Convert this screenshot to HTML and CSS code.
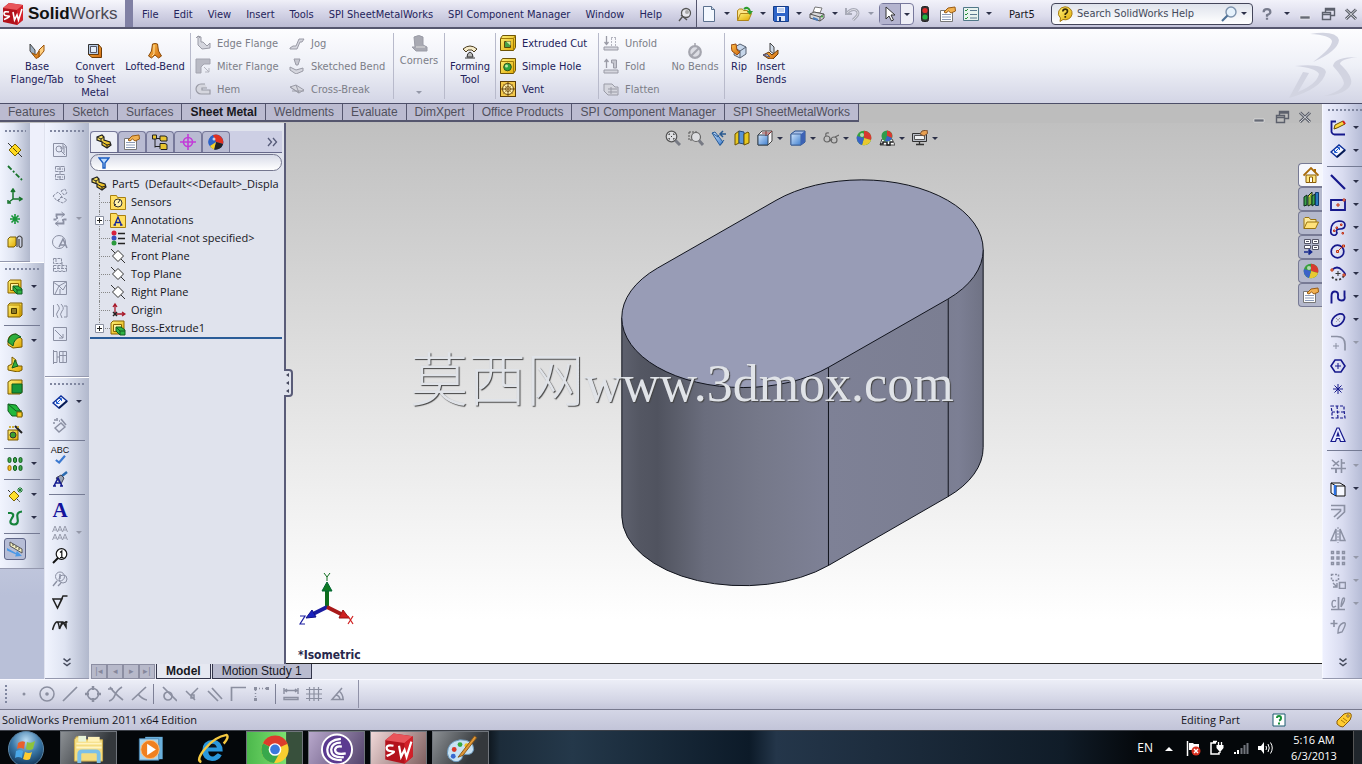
FILE: index.html
```html
<!DOCTYPE html>
<html lang="en">
<head>
<meta charset="utf-8">
<title>SolidWorks Premium 2011</title>
<link rel="stylesheet" href="styles.css">
</head>
<body>
<svg class="sprite" aria-hidden="true">
<defs>
<linearGradient id="gy" x1="0" y1="0" x2="1" y2="1"><stop offset="0" stop-color="#fff27a"/><stop offset="1" stop-color="#e0a800"/></linearGradient>
<linearGradient id="gb" x1="0" y1="0" x2="1" y2="1"><stop offset="0" stop-color="#cfe4fb"/><stop offset="1" stop-color="#3f7fd0"/></linearGradient>
<linearGradient id="go" x1="0" y1="0" x2="1" y2="1"><stop offset="0" stop-color="#ffc04a"/><stop offset="1" stop-color="#d06a10"/></linearGradient>
<radialGradient id="orb" cx=".5" cy=".25" r=".8"><stop offset="0" stop-color="#b9dcf2"/><stop offset=".5" stop-color="#3a78a8"/><stop offset="1" stop-color="#0b2a4a"/></radialGradient>
</defs>
<symbol id="sw" viewBox="0 0 24 24"><path d="M2 6l6-5 14 2v15l-6 5-14-3z" fill="#b3121c"/><path d="M2 6l6-5 14 2-6 5z" fill="#e8545a"/><path d="M16 8l6-5v15l-6 5z" fill="#d32029"/><path d="M8 10q-5-1-5 1.500t4 2.500-4 3.500M12 10l1.500 8 2.500-5 1.500 5L21 7" fill="none" stroke="#fff" stroke-width="1.600"/></symbol>
<symbol id="pin" viewBox="0 0 16 16"><circle cx="9" cy="6" r="4.500" fill="#e8e8ee" stroke="#555" stroke-width="1.300"/><circle cx="10" cy="5" r="2" fill="#aaa"/><path d="M6 9l-4 5M4 8l6 5" stroke="#555" stroke-width="1.400"/></symbol>
<symbol id="new" viewBox="0 0 16 16"><path d="M2.500 .5h8l3 3v12h-11z" fill="#f4f8ff" stroke="#5b708e"/><path d="M10.500 .5v3h3" fill="#cfdcec" stroke="#5b708e"/></symbol>
<symbol id="open" viewBox="0 0 16 16"><path d="M.5 14.500v-10l2-1.500h3l1 1.500h4v2" fill="#fce58a" stroke="#b08518"/><path d="M.5 14.500l3-7h11l-3 7z" fill="url(#gy)" stroke="#b08518"/><path d="M7 3q4-3 6 2" fill="none" stroke="#2e9c2e" stroke-width="2"/><path d="M10 5h6l-3 4z" fill="#2e9c2e"/></symbol>
<symbol id="save" viewBox="0 0 16 16"><path d="M.5 .5h15v15h-14l-1-1z" fill="#2e64c8" stroke="#153c88"/><path d="M4 1h8v6H4z" fill="#f4f7ff"/><path d="M5 3h6M5 5h6" stroke="#8aa6d8"/><path d="M4 10h8v5H4z" fill="#dfe6f5"/><path d="M6 11h2v4H6z" fill="#153c88"/></symbol>
<symbol id="print" viewBox="0 0 16 16"><path d="M4 6l2-5 7 1-2 5z" fill="#fff" stroke="#777"/><path d="M1 8l4-2 10 2v4l-4 3-10-3z" fill="#d8d8da" stroke="#555"/><path d="M1 8l10 3 4-3M11 11v4" fill="none" stroke="#555"/><path d="M4 12l5 2" stroke="#4a7ec0" stroke-width="2"/><circle cx="13" cy="10.500" r="1" fill="#3a3"/></symbol>
<symbol id="undo" viewBox="0 0 16 16"><path d="M1 2v6h6" fill="none" stroke="#a9abb8" stroke-width="2"/><path d="M2 7q5-5 9-3 4 3 0 7l-3 3" fill="none" stroke="#a9abb8" stroke-width="3"/><path d="M2 7q5-5 9-3 4 3 0 7l-3 3" fill="none" stroke="#dcdce4"/></symbol>
<symbol id="arrow" viewBox="0 0 16 16"><path d="M4 1v12l3-3 2.500 5 2-1-2.500-5h4z" fill="#fff" stroke="#333"/></symbol>
<symbol id="traffic" viewBox="0 0 16 16"><rect x="4.500" y=".5" width="7" height="15" rx="2" fill="#333" stroke="#222"/><circle cx="8" cy="4.500" r="2.600" fill="#e02b2b"/><circle cx="8" cy="11" r="2.600" fill="#22b340"/></symbol>
<symbol id="props" viewBox="0 0 16 16"><path d="M.5 4.500h12v11H.5z" fill="#fff" stroke="#777"/><path d="M2 8.500h9M2 11h9M2 13.500h9" stroke="#8b9bb8"/><path d="M4 6l4-4 7-1 .5 4L11 7 8.500 5 6 7z" fill="#f0b050" stroke="#9a5c14"/></symbol>
<symbol id="opts" viewBox="0 0 16 16"><path d="M.5 1.500h15v13H.5z" fill="#e8f2ee" stroke="#507888"/><path d="M2 4l1 1 2-2M2 8l1 1 2-2M2 12l1 1 2-2" fill="none" stroke="#289038"/><path d="M7 4.500h7M7 8.500h7M7 12h7" stroke="#5b7890"/></symbol>
<symbol id="helpb" viewBox="0 0 16 16"><path d="M8 .8a7 6.500 0 1 1-2 12.700L3 15.500l.5-3.500A6.800 6.500 0 0 1 8 .8z" fill="url(#gy)" stroke="#a57a10"/><path d="M5.800 5.500q.2-2.300 2.400-2.300t2.300 2q0 1.300-2.200 2.800v1M8.300 10v1.800" fill="none" stroke="#3a2c08" stroke-width="1.700"/></symbol>
<symbol id="mag" viewBox="0 0 16 16"><circle cx="10" cy="6" r="5" fill="#e6f2fc" stroke="#7d93ad" stroke-width="1.400"/><path d="M6.500 9.500L1 15" stroke="#4d7096" stroke-width="2.200"/></symbol>
<symbol id="q" viewBox="0 0 16 16"><path d="M3.500 5.500q0-4 4.500-4t4.500 4q0 2-4.500 4v2M8 13v2.500" fill="none" stroke="#777b8c" stroke-width="3"/></symbol>
<symbol id="min" viewBox="0 0 16 16"><path d="M3 10h10v3H3z" fill="#666a75" stroke="#eee" stroke-width=".6"/></symbol>
<symbol id="rest" viewBox="0 0 16 16"><path d="M5.500 6V2.500h9v7H11M5 4h9" fill="none" stroke="#5c606c" stroke-width="1.400"/><path d="M2.500 6.500h8v7h-8zM2 8.500h9" fill="none" stroke="#5c606c" stroke-width="1.400"/></symbol>
<symbol id="close" viewBox="0 0 16 16"><path d="M3 3.500l10 9.500m0-9.500L3 13" stroke="#5a5e68" stroke-width="3"/><path d="M3 3.500l10 9.500m0-9.500L3 13" stroke="#d8dae0"/></symbol>
<symbol id="baseflange" viewBox="0 0 16 16"><path d="M1 1l5 6v7L1 8z" fill="#9fb0c2" stroke="#444"/><path d="M10 7l5-5v6l-5 6z" fill="#ffcf80" stroke="#9a5208"/><path d="M3 10l4 2 3-4v6l-3 1.500z" fill="url(#go)" stroke="#9a5208"/></symbol>
<symbol id="convert" viewBox="0 0 16 16"><path d="M1.500 1.500h10v10h-10z" fill="#b8cbe2" stroke="#333"/><path d="M3.500 3.500h6v6h-6z" fill="#e4eefa" stroke="#556"/><path d="M11.500 1.500l3 3.500v9.500H5l-3.500-3h10z" fill="url(#go)" stroke="#6b3a08"/></symbol>
<symbol id="loft" viewBox="0 0 16 16"><path d="M5.500 1q2.500-1 5 0l1 7 3 5-3 2-3.500-3L4.500 15l-3-2 3-5z" fill="url(#go)" stroke="#8a4a08"/><path d="M7 2v9l-2 2" fill="none" stroke="#ffe0a0"/></symbol>
<symbol id="edge" viewBox="0 0 16 16"><path d="M3 1v9l4 4 8-1V8l-3 3-4-4H6V2zM1 3l2-2 2 2" fill="#d5d6de" stroke="#9a9ba6"/></symbol>
<symbol id="miter" viewBox="0 0 16 16"><path d="M1 1h14v5H9L6 9v6H1z" fill="#b9bac4" stroke="#a4a5b0"/><path d="M9 9l5 5M14 10v4h-4" fill="none" stroke="#b4b5bf"/></symbol>
<symbol id="hem" viewBox="0 0 16 16"><path d="M10 3H6a4.500 4.500 0 0 0 0 10h9V9H7V7h5" fill="#d5d6de" stroke="#9a9ba6" stroke-width="1.200"/></symbol>
<symbol id="jog" viewBox="0 0 16 16"><path d="M1 13l3-2h3l3-7h5l-2 3h-2l-3 7H1z" fill="#d5d6de" stroke="#9a9ba6"/></symbol>
<symbol id="sbend" viewBox="0 0 16 16"><path d="M5 1h6L9 7H7z" fill="#c6c7d0" stroke="#9a9ba6"/><path d="M1 9l6 3 7-2v3l-7 3-6-4z" fill="#d5d6de" stroke="#9a9ba6"/></symbol>
<symbol id="cross" viewBox="0 0 16 16"><path d="M1 6l6-2 8 5-5 3z" fill="#d5d6de" stroke="#9a9ba6"/><path d="M1 6l9 6M7 4l3 8M3 10h12" stroke="#9a9ba6"/></symbol>
<symbol id="corner" viewBox="0 0 18 18"><path d="M4 2q5-3 9 0v8l4 2v4H6l-4-4h3z" fill="#a8a9b2" stroke="#9a9ba6"/><path d="M6 12h9" stroke="#ddd"/></symbol>
<symbol id="form" viewBox="0 0 16 16"><path d="M1 6q7-6 14 0l-3 3-2-2H6L4 9z" fill="#f6eccb" stroke="#4a3c20"/><path d="M5 14q0-4 3-5 3 1 3 5z" fill="#bbb" stroke="#333"/><path d="M3 15h10" stroke="#333"/></symbol>
<symbol id="ecut" viewBox="0 0 16 16"><path d="M.5 3.500l2-3h13v12l-2 3H.5z" fill="url(#gy)" stroke="#6e5508"/><path d="M.5 3.500h13v12M13.500 3.500l2-3" fill="none" stroke="#a07c08"/><path d="M4.500 6.500h6v6h-6z" fill="#4aa048" stroke="#5a4a08"/><path d="M6 6.500h4.500v4z" fill="#d8f0a0"/></symbol>
<symbol id="shole" viewBox="0 0 16 16"><path d="M.5 3.500l2-3h13v12l-2 3H.5z" fill="url(#gy)" stroke="#6e5508"/><path d="M.5 3.500h13v12" fill="none" stroke="#a07c08"/><circle cx="7.500" cy="9" r="3.800" fill="#2fa540" stroke="#32551a"/><circle cx="6.500" cy="8" r="1.500" fill="#bfe8a8"/></symbol>
<symbol id="vent" viewBox="0 0 16 16"><rect x=".5" y=".5" width="15" height="15" fill="#f2c84a" stroke="#5a3c08"/><circle cx="8" cy="8" r="5.500" fill="#fff2b0" stroke="#6b4810"/><circle cx="8" cy="8" r="2.500" fill="none" stroke="#6b4810" stroke-width=".8"/><path d="M8 0v16M0 8h16" stroke="#6b4810"/><path d="M3 3l10 10M13 3L3 13" stroke="#a07830" stroke-width=".7"/></symbol>
<symbol id="unfold" viewBox="0 0 16 16"><path d="M3.500 1v8M1.500 7l2 2.500L5.500 7" fill="none" stroke="#9a9ba6" stroke-width="1.300"/><path d="M8.500 3v8M12.500 3v8M8 2.500h6" stroke="#b4b5bf" stroke-dasharray="2 1"/><path d="M1 12h14v3H1z" fill="#d5d6de" stroke="#9a9ba6"/></symbol>
<symbol id="fold" viewBox="0 0 16 16"><path d="M3.500 2v8M1.500 4l2-2.500L5.500 4" fill="none" stroke="#9a9ba6" stroke-width="1.300"/><path d="M8.500 2h5v8h-3V5h-2z" fill="#c6c7d0" stroke="#9a9ba6"/><path d="M1 12h14v3H1z" fill="#d5d6de" stroke="#9a9ba6"/></symbol>
<symbol id="flat" viewBox="0 0 16 16"><path d="M1 3h8l3 3h3v8H5L1 10z" fill="#d5d6de" stroke="#9a9ba6"/><path d="M5 8h9M5 11h9M8 6v7" stroke="#9a9ba6"/></symbol>
<symbol id="nob" viewBox="0 0 16 16"><path d="M8 0v5" stroke="#a4a5ae" stroke-width="1.500"/><circle cx="8" cy="9" r="5.800" fill="#dcdde4" stroke="#a4a5ae" stroke-width="2.200"/><path d="M4 13l8-8" stroke="#a4a5ae" stroke-width="2.200"/></symbol>
<symbol id="rip" viewBox="0 0 16 16"><path d="M4 4l5-3 6 3v7l-6 4-6-3z" fill="#c6d6ea" stroke="#555f70"/><path d="M9 8v7M9 8l6-4M9 8L4 5" stroke="#555f70"/><path d="M0 2l5-1 1 6 3 2-3 3-5-4z" fill="url(#go)" stroke="#994a10"/></symbol>
<symbol id="ibend" viewBox="0 0 16 16"><path d="M7 0l4 4v7L7 8z" fill="#cfdae8" stroke="#444"/><path d="M0 12l6-3 3 3 6-5v4l-5 5H6z" fill="url(#go)" stroke="#6b3a08"/><path d="M0 12l4-1 3 3z" fill="#dce8f4" stroke="#557"/></symbol>
<symbol id="plane" viewBox="0 0 16 16"><path d="M1 1l14 14" stroke="#333"/><path d="M8 2l6 6-6 6-6-6z" fill="#ffd91f" stroke="#7a6200"/><path d="M6 6l4 4" stroke="#5a4a00"/></symbol>
<symbol id="axis" viewBox="0 0 16 16"><path d="M1 1l14 14" stroke="#18742c" stroke-width="1.800" stroke-dasharray="5 2 2 2"/></symbol>
<symbol id="csys" viewBox="0 0 16 16"><path d="M6 2v9h8M6 11l-4 3M4 4l2-3 2 3M12 9l3 2-3 2M1 12v3h3" fill="none" stroke="#18742c" stroke-width="1.500"/></symbol>
<symbol id="pt" viewBox="0 0 16 16"><path d="M8 3v10M3 8h10M4.500 4.500l7 7M11.500 4.500l-7 7" stroke="#18943a" stroke-width="1.600"/></symbol>
<symbol id="mate" viewBox="0 0 16 16"><path d="M1 5l2-2h6v8l-2 2H1z" fill="url(#gy)" stroke="#7a5c00"/><path d="M10 13V4q2.500-4 5 0v8q-1.500 3-3 0V5" fill="none" stroke="#444" stroke-width="1.200"/></symbol>
<symbol id="boss" viewBox="0 0 16 16"><path d="M1 3l2-2h11v11l-2 2H1z" fill="url(#gy)" stroke="#8a6500"/><path d="M3.500 4.500h8v7h-8z" fill="#fff3a0" stroke="#8a6500"/><path d="M6 7h5l4 3v5h-5l-4-4z" fill="#2fb344" stroke="#115c20"/><path d="M10 11h5M10 11v4M6 7l4 4" stroke="#115c20"/></symbol>
<symbol id="cut" viewBox="0 0 16 16"><path d="M1 3l2-2h12v12l-2 2H1z" fill="url(#gy)" stroke="#7a5a00"/><path d="M1 3h12v12" fill="none" stroke="#b48a00"/><path d="M4.500 6.500h5v5h-5z" fill="#8c7a28" stroke="#4a3a00"/></symbol>
<symbol id="fil" viewBox="0 0 16 16"><path d="M1 7q1-6 8-6l6 5v8l-9 1-5-3z" fill="url(#gy)" stroke="#7a5a00"/><path d="M1 9q1-8 8-8l5 3q-7 1-8 9z" fill="#2fae3c" stroke="#115c20"/></symbol>
<symbol id="rib" viewBox="0 0 16 16"><path d="M5 1l4 3v6h6v4l-4 2-10-2v-4l4-2z" fill="url(#gy)" stroke="#7a5a00"/><path d="M8 4l3 6-6 2z" fill="#2fae3c" stroke="#115c20"/></symbol>
<symbol id="shell" viewBox="0 0 16 16"><path d="M1 3l3-2h11v12l-2 2H1z" fill="url(#gy)" stroke="#7a5a00"/><path d="M5 5h10v9H5z" fill="#16963a" stroke="#115c20"/></symbol>
<symbol id="draft" viewBox="0 0 16 16"><path d="M1 2l8 1 6 8v3H5L1 9z" fill="#22b83c" stroke="#115c20"/><path d="M1 2l8 7h6" fill="none" stroke="#115c20"/><path d="M10 10h5v5h-5z" fill="#f4cc28" stroke="#7a5a00"/></symbol>
<symbol id="hwiz" viewBox="0 0 16 16"><path d="M1 5h10v10H1z" fill="url(#gy)" stroke="#7a5a00"/><circle cx="6" cy="10" r="3" fill="#3aa030" stroke="#333"/><path d="M8 1l7 7" stroke="#222" stroke-width="2"/><path d="M2 2h2M6 1v2M11 1v2" stroke="#c8a000" stroke-width="1.500"/></symbol>
<symbol id="patt" viewBox="0 0 16 16"><g fill="#3fa848" stroke="#115c20"><rect x="1" y="1.500" width="3" height="5" rx="1.500"/><rect x="6.500" y="1.500" width="3" height="5" rx="1.500"/><rect x="12" y="1.500" width="3" height="5" rx="1.500"/><rect x="6.500" y="9.500" width="3" height="5" rx="1.500"/><rect x="12" y="9.500" width="3" height="5" rx="1.500"/></g><rect x="1" y="9.500" width="3" height="5" rx="1.500" fill="#f4c020" stroke="#a06a00"/></symbol>
<symbol id="refg" viewBox="0 0 16 16"><path d="M1 3l12 12" stroke="#333" stroke-dasharray="3 1"/><path d="M7 4l5 5-5 5-5-5z" fill="#ffe02a" stroke="#7a6200"/><path d="M13 0v6M10 3h6M11 1l4 4M15 1l-4 4" stroke="#187a2c"/></symbol>
<symbol id="curve" viewBox="0 0 16 16"><path d="M1 3h3q4 1 1 5-4 6 2 6.500 5 0 3.500-6.500Q9 2 15 1.500" fill="none" stroke="#14823a" stroke-width="2.200"/></symbol>
<symbol id="inst" viewBox="0 0 16 16"><path d="M3 1l12 7v4L3 5z" fill="#f4f0c0" stroke="#555"/><path d="M6 3v2M9 5v2M12 7v2" stroke="#444"/><path d="M0 7l9 5 1-2 5 5-7 .5 1-2-9-4z" fill="#4a9ae8"/></symbol>
<symbol id="g1" viewBox="0 0 16 16"><path d="M1.500 1.500h10l3 3v10h-13zM11 2v3h3" /><circle cx="7" cy="7" r="3"/><path d="M9 9l4 4M8 6h4v5"/></symbol>
<symbol id="g2" viewBox="0 0 16 16"><path d="M3.500 1.500h9v5h-9zM3.500 9.500h9v5h-9zM8 1v14M5 4h6M5 12h6" stroke-dasharray="4 1"/></symbol>
<symbol id="g3" viewBox="0 0 16 16"><path d="M1 8l5-4 4 4-5 5zM6 13l4-4 5 3-4 3zM9 3l4-2 2 4-3 2z" stroke-dasharray="3 1"/></symbol>
<symbol id="g4" viewBox="0 0 16 16"><path d="M4.500 6V3.500h8M11.500 10v2.500h-8M4.500 8.500h-3M14.500 8.500h-3M5 6v2M11 8v2" stroke-width="1.800"/><path d="M9.500 1l3 2.500-3 2.500M6.500 10l-3 2.500 3 2.500"/></symbol>
<symbol id="g5" viewBox="0 0 16 16"><circle cx="7" cy="8" r="6.500"/><path d="M7 13l4-8 4 9M8 11h6" stroke-width="1.500"/></symbol>
<symbol id="g6" viewBox="0 0 16 16"><path d="M1.500 1.500h8v5h-8zM1.500 8.500h13v6h-13zM6 9v5M10 5v9M1 11.500h14M4 2v4" stroke-dasharray="3 1"/></symbol>
<symbol id="g7" viewBox="0 0 16 16"><path d="M1.500 1.500h13v13h-13zM1 2l6 4 7-4M3 14l4-8 4 4 3-5M8 9v5"/></symbol>
<symbol id="g8" viewBox="0 0 16 16"><path d="M1.500 2v12M5 1q4 4 1 7t0 7M9 1q4 4 1 7t0 7M12 3h3v11h-3"/></symbol>
<symbol id="g9" viewBox="0 0 16 16"><path d="M1.500 1.500h13v13h-13zM3 4l8 8M11 8v4H7"/></symbol>
<symbol id="g10" viewBox="0 0 16 16"><path d="M1.500 1v14M1 2.500h4v11H1M7.500 2.500h7v11h-7zM7 6.500h8M11 2v11M5 8h3"/></symbol>
<symbol id="dim" viewBox="0 0 16 16"><path d="M1 9l8-7 6 5-8 7z" fill="#f4f7ff" stroke="#0d2f9a" stroke-width="1.400"/><path d="M5 9l4-4M4.500 6.500V9.500H7.500M7 4.500h2.500V7" fill="none" stroke="#1c5bd0"/><path d="M7 14l8-7" stroke="#081c55" stroke-width="2"/></symbol>
<symbol id="dimg" viewBox="0 0 16 16"><path d="M3 11l6-5 4 4-6 5z" fill="none" stroke="#8b90a3" stroke-width="1.400"/><path d="M9 2l5 6M2 3h2M5 1v3M1 6h2M7 4h1" stroke="#8b90a3" stroke-width="1.600"/></symbol>
<symbol id="chk" viewBox="0 0 16 12"><path d="M3 6l4 3 7-8" fill="none" stroke="#3a78d0" stroke-width="2.600"/></symbol>
<symbol id="paint" viewBox="0 0 16 16"><path d="M15 1l-5 4" stroke="#2a6ab0" stroke-width="2.500"/><path d="M4 7l5-3 3 3-3 6z" fill="#9aa4b4" stroke="#445"/><path d="M2 15l4-8 4 8M3.500 12h5M1 15h3M8 15h3" fill="none" stroke="#151c90" stroke-width="1.600"/></symbol>
<symbol id="aaa" viewBox="0 0 16 16"><path d="M.5 7L3 1l2.500 6L8 1l2.500 6L13 1l2.500 6M1.500 5h3M6.500 5h3M11.500 5h3M.5 15L3 9l2.500 6L8 9l2.500 6L13 9l2.500 6M1.500 13h3M6.500 13h3M11.500 13h3" fill="none" stroke="#999dad"/></symbol>
<symbol id="ball" viewBox="0 0 16 16"><circle cx="9.500" cy="6" r="5.300" fill="#fff" stroke="#111" stroke-width="1.200"/><path d="M8 4.500l1.800-1.500v6.500M8 9.500h3.500" fill="none" stroke="#111" stroke-width="1.200"/><path d="M6 10l-5 5" stroke="#111" stroke-width="2"/></symbol>
<symbol id="ballg" viewBox="0 0 16 16"><circle cx="8" cy="5.500" r="4.500" fill="none" stroke="#8b90a3"/><circle cx="11" cy="8" r="4" fill="none" stroke="#8b90a3"/><path d="M8 3v5M5 10l-4 5M9 12l-3 3" stroke="#8b90a3" stroke-width="1.400"/></symbol>
<symbol id="surf" viewBox="0 0 16 16"><path d="M1 5h9l-4.500 9zM5.500 14L11 2h4.500" fill="none" stroke="#222" stroke-width="1.500"/></symbol>
<symbol id="weld" viewBox="0 0 16 16"><path d="M.5 13q2-7 4-8t3 7q2-7 8-7M5 5h6l3 5V4M10 5l-2 6" fill="none" stroke="#222" stroke-width="1.500"/></symbol>
<symbol id="chev" viewBox="0 0 16 16"><path d="M4 3l4 3 4-3M4 8l4 3 4-3" fill="none" stroke="#444a5c" stroke-width="1.700"/></symbol>
<symbol id="chevr" viewBox="0 0 16 16"><path d="M4 4l3.500 4L4 12M9 4l3.500 4L9 12" fill="none" stroke="#555a78" stroke-width="1.300"/></symbol>
<symbol id="sketch" viewBox="0 0 16 16"><path d="M6 1.500H1.500V12q1 2.500 3 2.500H15" fill="none" stroke="#16188c" stroke-width="1.800"/><path d="M4 9l1-4 8-4 2 3-8 4z" fill="#ffd840" stroke="#6b5200"/><path d="M13 1l2 3" stroke="#d02020" stroke-width="2"/></symbol>
<symbol id="line" viewBox="0 0 16 16"><path d="M1 1l14 14" stroke="#16188c" stroke-width="2.200"/></symbol>
<symbol id="rect" viewBox="0 0 16 16"><path d="M1 3h14v10H1z" fill="none" stroke="#16188c" stroke-width="1.800"/><path d="M7 7h2v2H7zM13 2h2v2h-2z" fill="#f8e0c0" stroke="#c03018"/></symbol>
<symbol id="slot" viewBox="0 0 16 16"><path d="M1 10Q1 2 9 1q6 0 6 4t-5 4-3 4q-1 3-4 2t-2-5z" fill="none" stroke="#16188c" stroke-width="1.700"/><path d="M3.500 10h1.500v1.500h-1.500zM10.500 4h1.500v1.500h-1.500zM12 12.500h1.500v1.500h-1.500zM6 7h1.500v1.500H6z" fill="#f8e0c0" stroke="#c03018"/></symbol>
<symbol id="circ" viewBox="0 0 16 16"><circle cx="7.500" cy="8.500" r="6.300" fill="none" stroke="#16188c" stroke-width="1.700"/><path d="M8 8l5-5" stroke="#c03018"/><path d="M6.500 7.500h2v2h-2zM12.500 2h2v2h-2z" fill="#f8d080" stroke="#c03018"/></symbol>
<symbol id="arc" viewBox="0 0 16 16"><path d="M2 4q5-5 10 0t2 5" fill="none" stroke="#16188c" stroke-width="1.700"/><path d="M14 10q-6 7-12 1" fill="none" stroke="#333" stroke-width="1.800" stroke-dasharray="2 2"/><path d="M8 5v5M5.500 7.500h5" stroke="#333"/><path d="M1 3h2v2H1zM13 8h2v2h-2z" fill="#f8d080" stroke="#c03018"/></symbol>
<symbol id="spl" viewBox="0 0 16 16"><path d="M1.500 14.500V7q0-4.500 3.500-4.500T8 7t3.500 4.500 3-4.500V1.500" fill="none" stroke="#16188c" stroke-width="1.900"/></symbol>
<symbol id="ell" viewBox="0 0 16 16"><ellipse cx="8" cy="8" rx="7.500" ry="4.800" transform="rotate(-42 8 8)" fill="none" stroke="#16188c" stroke-width="1.700"/><path d="M6 6l4 4M10 6l-4 4" stroke="#777" stroke-dasharray="1 1"/></symbol>
<symbol id="sfil" viewBox="0 0 16 16"><path d="M1 1.500h6q8 0 8 8v6" fill="none" stroke="#8b90a3" stroke-width="1.700"/><path d="M6 8v6M3 11h6" stroke="#8b90a3"/></symbol>
<symbol id="poly" viewBox="0 0 16 16"><path d="M5 2h6l4 6-4 6H5L1 8z" fill="none" stroke="#16188c" stroke-width="1.600"/><path d="M8 5v6M5 8h6" stroke="#16188c"/></symbol>
<symbol id="spt" viewBox="0 0 16 16"><path d="M8 3v10M3 8h10M4.500 4.500l7 7M11.500 4.500l-7 7" stroke="#16188c"/></symbol>
<symbol id="cplane" viewBox="0 0 16 16"><path d="M1 2h13v4l1 8H2V8zM2 8h12M7 2l1 12" fill="none" stroke="#16188c" stroke-width="1.200" stroke-dasharray="3 1.500"/></symbol>
<symbol id="stext" viewBox="0 0 16 16"><path d="M1 14.500L7 1h2l6 13.500h-4.500l-1-3h-3l-1 3zM7 9h2L8 6z" fill="#e8ecff" stroke="#16188c" stroke-width="1.200"/></symbol>
<symbol id="trim" viewBox="0 0 16 16"><path d="M11.500 1v14M1 10.500h15M2 2l7 6M9 3L3 8M11 5h4" fill="none" stroke="#8b90a3" stroke-width="1.600"/><path d="M6 11v4" stroke="#8b90a3" stroke-width="2"/></symbol>
<symbol id="conv" viewBox="0 0 16 16"><path d="M1 2h9l5 3v10H6L1 12z" fill="#f6f8ff" stroke="#111"/><path d="M1 2l5 3h9M6 5v10" fill="none" stroke="#111"/><path d="M5 4v10" stroke="#2a6fe0" stroke-width="2.500"/></symbol>
<symbol id="offs" viewBox="0 0 16 16"><path d="M1 1.500h13.500V8L7 15M1 5.500h9.500V7L4 13" fill="none" stroke="#8b90a3" stroke-width="1.700"/></symbol>
<symbol id="mirr" viewBox="0 0 16 16"><path d="M8 0v16" stroke="#8b90a3" stroke-dasharray="2 1"/><path d="M6 2L1 13.500h5zM10 2l5 11.500h-5z" fill="none" stroke="#8b90a3" stroke-width="1.500"/></symbol>
<symbol id="lpat" viewBox="0 0 16 16"><path d="M1.500 1.500h2v2h-2zM7 1.500h2v2H7zM12.500 1.500h2v2h-2zM1.500 7h2v2h-2zM7 7h2v2H7zM12.500 7h2v2h-2zM1.500 12.500h2v2h-2zM7 12.500h2v2H7zM12.500 12.500h2v2h-2z" fill="none" stroke="#8b90a3" stroke-width="1.400"/></symbol>
<symbol id="move" viewBox="0 0 16 16"><path d="M1.500 1.500h7v6h-7z" fill="none" stroke="#8b90a3" stroke-width="1.500" stroke-dasharray="2 1.500"/><path d="M9.500 9.500h6v6h-6z" fill="none" stroke="#8b90a3" stroke-width="1.600"/><path d="M3 10l4 4M7 10v4H3" fill="none" stroke="#8b90a3" stroke-width="1.400"/></symbol>
<symbol id="rel" viewBox="0 0 16 16"><path d="M1 13.500h14M8.500 1v12" stroke="#8b90a3" stroke-width="1.700"/><path d="M6 5q-4-2-4 3t4 2M11 11q5-8 3-9t-3 9" fill="none" stroke="#8b90a3" stroke-width="1.400"/></symbol>
<symbol id="rep" viewBox="0 0 16 16"><path d="M4 1v7M.5 4.500h7" stroke="#8b90a3" stroke-width="1.600"/><path d="M8 14q0-8 5-10t-1 9z" fill="none" stroke="#8b90a3" stroke-width="1.400"/></symbol>
<symbol id="part" viewBox="0 0 16 16"><path d="M1 3l5-2 2 2v3l6 2 1 3-4 3-5-3V8L1 6z" fill="url(#gy)" stroke="#222" stroke-width="1.200"/><path d="M1 3l4 2 3-2M6 8l5 3 4-1M11 11v3M5 5v3" fill="none" stroke="#222"/></symbol>
<symbol id="cfg" viewBox="0 0 16 16"><path d="M3 2v11.500M3 4.500h5M3 12.500h5" stroke="#222" fill="none"/><path d="M.5 1h4v4h-4zM8 2h5l2 1v4H9L8 6zM8 9.500h5l2 1v5H9l-1-1z" fill="#e8c430" stroke="#222"/></symbol>
<symbol id="dimx" viewBox="0 0 16 16"><circle cx="8" cy="8" r="4.500" fill="none" stroke="#c23cd8" stroke-width="1.600"/><path d="M8 0v16M0 8h16" stroke="#c23cd8" stroke-width="1.600"/></symbol>
<symbol id="app" viewBox="0 0 16 16"><circle cx="8" cy="8" r="7.500" fill="#2b62c8"/><path d="M8 8L1 11A7.500 7.500 0 0 1 5 1z" fill="#2b62c8"/><path d="M8 8L5 1a7.500 7.500 0 0 1 10 9z" fill="#e03020"/><path d="M8 8l7 2a7.500 7.500 0 0 1-9 5.500z" fill="#222"/><path d="M8 8l-2 7.500A7.500 7.500 0 0 1 2 12z" fill="#f4d028"/><circle cx="6" cy="5" r="1.500" fill="#fff" opacity=".7"/></symbol>
<symbol id="rgb" viewBox="0 0 16 16"><circle cx="8" cy="8" r="7.300" fill="#38a03c"/><path d="M8 8V.7A7.300 7.300 0 0 1 15 10z" fill="#d83a30"/><path d="M8 8l7 2A7.300 7.300 0 0 1 6 15z" fill="#e8c830"/><path d="M8 8L6 15A7.300 7.300 0 0 1 1 6z" fill="#3a62c8"/><circle cx="6" cy="5" r="2" fill="#fff" opacity=".6"/></symbol>
<symbol id="funnel" viewBox="0 0 12 12"><path d="M1 1h10L7 6v5H5V6z" fill="#bcdcff" stroke="#1b5cc0" stroke-width="1.400"/></symbol>
<symbol id="sens" viewBox="0 0 16 16"><path d="M.5 1.500h6l1 2h8v12H.5z" fill="#ffdf60" stroke="#a98010"/><circle cx="8" cy="9" r="4" fill="#fff3b0" stroke="#333"/><path d="M8 9l2-3M4 12l2-2" stroke="#333"/></symbol>
<symbol id="anno" viewBox="0 0 16 16"><path d="M.5 1.500h6l1 2h8v12H.5z" fill="#ffdf60" stroke="#a98010"/><path d="M4.500 13L8 5l3.500 8M6 10.500h4M3.500 13h2.500M10 13h2.500" fill="none" stroke="#14259c" stroke-width="1.300"/></symbol>
<symbol id="mat" viewBox="0 0 16 16"><circle cx="4" cy="3" r="2.500" fill="#d8203c"/><circle cx="4" cy="8" r="2.500" fill="#3a4ec0"/><circle cx="4" cy="13" r="2.500" fill="#2a9a3c"/><path d="M8 3.500h7M8 8.500h7M8 13.500h7" stroke="#222" stroke-width="1.500"/></symbol>
<symbol id="pl" viewBox="0 0 16 16"><path d="M8 2.500l5.500 5.500L8 13.500 2.500 8z" fill="#fff" stroke="#333"/><path d="M1 1l4 4M11 11l4 4" stroke="#333"/></symbol>
<symbol id="orig" viewBox="0 0 16 16"><path d="M5 12V2M3 5l2-3 2 3M5 12h9M12 10l3 2-3 2" fill="none" stroke="#a81828" stroke-width="1.300"/><path d="M3 10l4 4M7 10l-4 4" stroke="#222" stroke-width="1.500"/></symbol>
<symbol id="zfit" viewBox="0 0 16 16"><circle cx="6.500" cy="6.500" r="5.300" fill="#dcdde0" stroke="#555" stroke-width="1.200"/><path d="M4 5V4h1M8 4h1v1M9 8v1H8M5 9H4V8M6 6.500h1" fill="none" stroke="#333"/><path d="M10.500 10.500l4.500 4.500" stroke="#777a84" stroke-width="3"/></symbol>
<symbol id="zarea" viewBox="0 0 16 16"><path d="M1 2h8v8H1z" fill="none" stroke="#555" stroke-dasharray="2 1"/><circle cx="8" cy="7" r="4.500" fill="#dcdde0" stroke="#666" stroke-width="1.200"/><path d="M11 10.500l4 4.500" stroke="#777a84" stroke-width="3"/></symbol>
<symbol id="prev" viewBox="0 0 16 16"><path d="M1 3l3-1 8 10-3 3.500z" fill="url(#gb)" stroke="#285c98"/><path d="M1 3l6 4 1-2M9 15l4-5" fill="none" stroke="#285c98"/><path d="M15 4H9M12 1L9 4l3 3" fill="none" stroke="#2a5a90" stroke-width="1.500"/></symbol>
<symbol id="sect" viewBox="0 0 16 16"><path d="M1 4l4-3v12l-4 2z" fill="#e8c820" stroke="#6b5200"/><path d="M5 1l5 1v12l-5-1z" fill="#5a94d8" stroke="#234a80"/><path d="M10 4l4-2 1 1v10l-5 2z" fill="#e8c820" stroke="#6b5200"/></symbol>
<symbol id="vcube" viewBox="0 0 16 16"><path d="M1 5l4-4h10v10l-4 4H1z" fill="#f4f4f6" stroke="#444"/><path d="M1 5h10v10H1z" fill="url(#gb)" stroke="#345"/><path d="M11 5l4-4M9 1v5M5 3h8" stroke="#843030"/></symbol>
<symbol id="dcube" viewBox="0 0 16 16"><path d="M1 4l4-3h10v11l-4 3H1z" fill="#a8c0e8" stroke="#234a88"/><path d="M1 4h10v11H1z" fill="url(#gb)" stroke="#41659c"/><path d="M11 4l4-3v11l-4 3z" fill="#3c62b4"/></symbol>
<symbol id="glass" viewBox="0 0 16 16"><circle cx="4" cy="9" r="3" fill="none" stroke="#666" stroke-width="1.200"/><circle cx="11" cy="10" r="3" fill="none" stroke="#666" stroke-width="1.200"/><path d="M3 6q-1-4 3-3M7 9q1 3 2 0M12 7l4-2" fill="none" stroke="#666" stroke-width="1.200"/></symbol>
<symbol id="scene" viewBox="0 0 16 16"><path d="M1 15l2-6h10l3 6z" fill="#fff" stroke="#444"/><path d="M1 14h3v-2h4v3h3v-3h3" fill="none" stroke="#222" stroke-width="1.500"/><circle cx="8" cy="6" r="5.500" fill="#2e9c4c"/><path d="M8 6V.5A5.500 5.500 0 0 1 13 8z" fill="#d83a30"/><path d="M8 6l5 2a5.500 5.500 0 0 1-7 3z" fill="#3a62c8"/></symbol>
<symbol id="vset" viewBox="0 0 16 16"><path d="M.5 3.500h14v8h-14z" fill="#b8bcc4" stroke="#333"/><path d="M2.500 5.500h10v4h-10z" fill="#f0f2f4" stroke="#555"/><path d="M7.500 12v2M4 14.500h8" stroke="#333" stroke-width="1.300"/><path d="M8 4l2-3 5-1 .5 3.500L12 6z" fill="#e8a050" stroke="#7a5030"/></symbol>
<symbol id="home" viewBox="0 0 16 16"><path d="M3 8h10v7.500H3z" fill="#ffe680" stroke="#8a5c08"/><path d="M.5 8.500L8 1l7.500 7.500" fill="none" stroke="#a86a08" stroke-width="1.800"/><path d="M6.500 10h3v5.500h-3z" fill="#fff" stroke="#8a5c08"/><path d="M12 2v3" stroke="#a86a08" stroke-width="2"/></symbol>
<symbol id="lib" viewBox="0 0 16 16"><path d="M1 6l3-2v10l-3 1z" fill="#3aa04c" stroke="#0c2c18"/><path d="M5 5l4-4v12l-4 2z" fill="#e0d040" stroke="#0c2c18"/><path d="M6 6v8M8 4v9" stroke="#2a8a3c"/><path d="M9 5l3-2v10l-3 2z" fill="#3aa04c" stroke="#0c2c18"/><path d="M12.500 1.500h3v13h-3z" fill="#2a7cc0" stroke="#123c70"/></symbol>
<symbol id="fold2" viewBox="0 0 16 16"><path d="M1 13.500v-10l1-1h4l1.500 2H13v3" fill="#fce99a" stroke="#9a7410"/><path d="M1 13.500l3-6.500h11.500l-3 6.500z" fill="#ffe27a" stroke="#9a7410"/></symbol>
<symbol id="vpal" viewBox="0 0 16 16"><path d="M1.500 .5h6v4h-6zM9.500 .5h6v4h-6zM9.500 6.500h6v4h-6zM1.500 6.500h6v3h-6z" fill="#fff" stroke="#556"/><path d="M3 2.500h3M11 2.500h3M11 8.500h3" stroke="#556"/><path d="M1 13h7M5.500 10.500L8.500 13l-3 2.500" fill="none" stroke="#16288c" stroke-width="1.700"/></symbol>
<symbol id="xbox" viewBox="0 0 9 9"><path d="M.5 .5h8v8h-8z" fill="#fff" stroke="#8a90a0"/><path d="M2 4.500h5M4.500 2v5" stroke="#222"/></symbol>
<symbol id="s1" viewBox="0 0 16 16"><circle cx="8" cy="8" r="1.500" fill="#8b8fa0"/></symbol>
<symbol id="s2" viewBox="0 0 16 16"><circle cx="8" cy="8" r="7" fill="none" stroke="#8b8fa0" stroke-width="1.500"/><circle cx="8" cy="8" r="1.800" fill="#8b8fa0"/></symbol>
<symbol id="s3" viewBox="0 0 16 16"><path d="M1 15L15 1" stroke="#8b8fa0" stroke-width="1.700"/></symbol>
<symbol id="s4" viewBox="0 0 16 16"><circle cx="8" cy="8" r="5.500" fill="none" stroke="#8b8fa0" stroke-width="1.600"/><path d="M8 0v4M8 12v4M0 8h4M12 8h4" stroke="#8b8fa0" stroke-width="2.500"/></symbol>
<symbol id="s5" viewBox="0 0 16 16"><path d="M2 1q4 6 13 13M14 1Q9 4 7 9t-6 6M0 3h5" fill="none" stroke="#8b8fa0" stroke-width="1.700"/></symbol>
<symbol id="s6" viewBox="0 0 16 16"><path d="M15 1L1 14M7 8q4 5 9 6" fill="none" stroke="#8b8fa0" stroke-width="1.700"/></symbol>
<symbol id="s7" viewBox="0 0 16 16"><circle cx="7" cy="10" r="4" fill="none" stroke="#8b8fa0" stroke-width="1.700"/><path d="M2 1l14 14" stroke="#8b8fa0" stroke-width="1.700"/></symbol>
<symbol id="s8" viewBox="0 0 16 16"><path d="M2 5l9 9M14 2l-7 7M7 9v3h3V9z" fill="none" stroke="#8b8fa0" stroke-width="1.500"/></symbol>
<symbol id="s9" viewBox="0 0 16 16"><path d="M1 5l10 10M5 2l10 11" stroke="#8b8fa0" stroke-width="1.700"/></symbol>
<symbol id="s10" viewBox="0 0 16 16"><path d="M1.500 15V1.500H16" fill="none" stroke="#8b8fa0" stroke-width="1.700"/></symbol>
<symbol id="s11" viewBox="0 0 16 16"><path d="M2.500 14V2.500h12" fill="none" stroke="#8b8fa0" stroke-dasharray="1 2" stroke-width="1.500"/><path d="M1 1h3v3H1zM1 12h3v3H1zM13 1h3v3h-3z" fill="#8b8fa0"/></symbol>
<symbol id="s12" viewBox="0 0 16 16"><path d="M1 2v6M15 2v6M2 4.500h12M4 3L2 4.500 4 6M12 3l2 1.500L12 6M1 11.500h14v2H1z" fill="none" stroke="#8b8fa0" stroke-width="1.400"/></symbol>
<symbol id="s13" viewBox="0 0 16 16"><path d="M3.500 1v14M8 1v14M12.500 1v14M0 3.500h16M0 8h16M0 12.500h16" stroke="#8b8fa0" stroke-width="1.200"/></symbol>
<symbol id="s14" viewBox="0 0 16 16"><path d="M13 2L3 13.500h12M7 9q4 1 4 5M10 5q4 3 4 8" fill="none" stroke="#8b8fa0" stroke-width="1.500"/></symbol>
<symbol id="tag" viewBox="0 0 16 16"><path d="M1 9l7-7q6-2 7 0t-1 6l-7 7q-3 0-6-3z" fill="#ffcc30" stroke="#8a5c08"/><path d="M5 8l4 3M7 6l4 3" stroke="#a87808"/><circle cx="12" cy="4" r="1.200" fill="#fff" stroke="#8a5c08"/></symbol>
<symbol id="hq" viewBox="0 0 14 14"><path d="M1 1h12v12H1z" fill="#fff" stroke="#1c5c70"/><path d="M5 5q0-2 2-2t2 2-2 2.500M7 9.500v2" fill="none" stroke="#189038" stroke-width="2"/></symbol>
</svg>

<header class="titlebar">
  <div class="brand"><svg class="i24"><use href="#sw"/></svg><span><b>Solid</b>Works</span></div>
  <nav class="menus">
    <button>File</button><button>Edit</button><button>View</button><button>Insert</button><button>Tools</button><button>SPI SheetMetalWorks</button><button>SPI Component Manager</button><button>Window</button><button>Help</button>
    <button aria-label="Pin menu"><svg class="i"><use href="#pin"/></svg></button>
  </nav>
  <div class="quick">
    <div class="pair"><button aria-label="New"><svg class="i"><use href="#new"/></svg></button><button class="dd" aria-label="New options"></button></div>
    <div class="pair"><button aria-label="Open"><svg class="i"><use href="#open"/></svg></button><button class="dd" aria-label="Open options"></button></div>
    <div class="pair"><button aria-label="Save"><svg class="i"><use href="#save"/></svg></button><button class="dd" aria-label="Save options"></button></div>
    <div class="pair"><button aria-label="Print"><svg class="i"><use href="#print"/></svg></button><button class="dd" aria-label="Print options"></button></div>
    <div class="pair off"><button aria-label="Undo"><svg class="i"><use href="#undo"/></svg></button><button class="dd" aria-label="Undo options"></button></div>
    <div class="pair pressed"><button aria-label="Select"><svg class="i"><use href="#arrow"/></svg></button><button class="dd" aria-label="Select options"></button></div>
    <button class="q1" aria-label="Rebuild"><svg class="i"><use href="#traffic"/></svg></button>
    <button class="q1" aria-label="File properties"><svg class="i"><use href="#props"/></svg></button>
    <button class="q1" aria-label="Options"><svg class="i"><use href="#opts"/></svg></button>
    <button class="dd" aria-label="More options"></button>
    <span class="doc">Part5</span>
    <label class="search"><svg class="i"><use href="#helpb"/></svg><input type="text" placeholder="Search SolidWorks Help" aria-label="Search SolidWorks Help"><svg class="i"><use href="#mag"/></svg><span class="tri"></span></label>
    <button class="q2" aria-label="Help"><svg class="i12"><use href="#q"/></svg></button>
    <button class="dd" aria-label="Help options"></button>
    <button class="q1" aria-label="Minimize"><svg class="i"><use href="#min"/></svg></button>
    <button class="q1" aria-label="Restore"><svg class="i"><use href="#rest"/></svg></button>
    <button class="q1" aria-label="Close"><svg class="i"><use href="#close"/></svg></button>
  </div>
</header>

<section class="ribbon">
  <div class="grp g-a">
    <button class="big w58"><svg class="i"><use href="#baseflange"/></svg>Base<br>Flange/Tab</button>
    <button class="big w58"><svg class="i"><use href="#convert"/></svg>Convert<br>to Sheet<br>Metal</button>
    <button class="big w62"><svg class="i"><use href="#loft"/></svg>Lofted-Bend</button>
  </div>
  <div class="grp off g-b">
    <div class="col c94"><button><svg class="i"><use href="#edge"/></svg>Edge Flange</button><button><svg class="i"><use href="#miter"/></svg>Miter Flange</button><button><svg class="i"><use href="#hem"/></svg>Hem</button></div>
    <div class="col"><button><svg class="i"><use href="#jog"/></svg>Jog</button><button><svg class="i"><use href="#sbend"/></svg>Sketched Bend</button><button><svg class="i"><use href="#cross"/></svg>Cross-Break</button></div>
  </div>
  <div class="grp off g-c"><button class="big tall"><svg class="i18"><use href="#corner"/></svg>Corners<span class="tri"></span></button></div>
  <div class="grp g-c"><button class="big"><svg class="i"><use href="#form"/></svg>Forming<br>Tool</button></div>
  <div class="grp g-d"><div class="col"><button><svg class="i"><use href="#ecut"/></svg>Extruded Cut</button><button><svg class="i"><use href="#shole"/></svg>Simple Hole</button><button><svg class="i"><use href="#vent"/></svg>Vent</button></div></div>
  <div class="grp off g-e">
    <div class="col"><button><svg class="i"><use href="#unfold"/></svg>Unfold</button><button><svg class="i"><use href="#fold"/></svg>Fold</button><button><svg class="i"><use href="#flat"/></svg>Flatten</button></div>
    <button class="big w58"><svg class="i"><use href="#nob"/></svg>No Bends</button>
  </div>
  <div class="grp g-f">
    <button class="big w28"><svg class="i"><use href="#rip"/></svg>Rip</button>
    <button class="big w36"><svg class="i"><use href="#ibend"/></svg>Insert<br>Bends</button>
  </div>
  <svg class="ds" viewBox="0 0 74 70" fill="#d2d4e1" aria-hidden="true"><path d="M24 3Q50-1 53 9 52 20 27 31 46 17 46 10 44 4 24 3z"/><path d="M9 35Q38 32 40 41 36 58 3 67L17 41l6 1-11 19Q31 53 33 43 30 37 9 35z"/><path d="M72 26Q54 28 54 33q13 12 11 20-5 11-27 12 19-5 20-13-1-6-11-17 1-9 25-9z"/></svg>
</section>

<main class="work">
  <div class="center">
    <div class="tabs" role="tablist">
      <button role="tab">Features</button><button role="tab">Sketch</button><button role="tab">Surfaces</button><button role="tab" class="on" aria-selected="true">Sheet Metal</button><button role="tab">Weldments</button><button role="tab">Evaluate</button><button role="tab">DimXpert</button><button role="tab">Office Products</button><button role="tab">SPI Component Manager</button><button role="tab">SPI SheetMetalWorks</button>
      <div class="docctl"><button aria-label="Minimize document"><svg class="i"><use href="#min"/></svg></button><button aria-label="Restore document"><svg class="i"><use href="#rest"/></svg></button><button aria-label="Close document"><svg class="i"><use href="#close"/></svg></button></div>
    </div>
    <div class="body">
      <aside class="rail">
        <div class="vbar first narrow">
          <div class="grip"></div>
          <div class="tool"><button aria-label="Plane"><svg class="i"><use href="#plane"/></svg></button></div>
          <div class="tool"><button aria-label="Axis"><svg class="i"><use href="#axis"/></svg></button></div>
          <div class="tool"><button aria-label="Coordinate system"><svg class="i"><use href="#csys"/></svg></button></div>
          <div class="tool"><button aria-label="Point"><svg class="i"><use href="#pt"/></svg></button></div>
          <div class="tool"><button aria-label="Mate reference"><svg class="i"><use href="#mate"/></svg></button></div>
        </div>
        <div class="vbar">
          <div class="grip"></div>
          <div class="tool"><button aria-label="Extruded boss"><svg class="i"><use href="#boss"/></svg></button><button class="dd" aria-label="More"></button></div>
          <div class="tool"><button aria-label="Extruded cut"><svg class="i"><use href="#cut"/></svg></button><button class="dd" aria-label="More"></button></div>
          <hr>
          <div class="tool"><button aria-label="Fillet"><svg class="i"><use href="#fil"/></svg></button><button class="dd" aria-label="More"></button></div>
          <div class="tool"><button aria-label="Rib"><svg class="i"><use href="#rib"/></svg></button></div>
          <div class="tool"><button aria-label="Shell"><svg class="i"><use href="#shell"/></svg></button></div>
          <div class="tool"><button aria-label="Draft"><svg class="i"><use href="#draft"/></svg></button></div>
          <div class="tool"><button aria-label="Hole wizard"><svg class="i"><use href="#hwiz"/></svg></button></div>
          <hr>
          <div class="tool"><button aria-label="Pattern"><svg class="i"><use href="#patt"/></svg></button><button class="dd" aria-label="More"></button></div>
          <hr>
          <div class="tool"><button aria-label="Reference geometry"><svg class="i"><use href="#refg"/></svg></button><button class="dd" aria-label="More"></button></div>
          <div class="tool"><button aria-label="Curves"><svg class="i"><use href="#curve"/></svg></button><button class="dd" aria-label="More"></button></div>
          <hr>
          <div class="tool"><button class="down" aria-label="Instant 3D"><svg class="i"><use href="#inst"/></svg></button></div>
        </div>
      </aside>
      <aside class="rail">
        <div class="vbar first">
          <div class="grip"></div>
          <div class="tool"><button disabled aria-label="Model view"><svg class="i gr"><use href="#g1"/></svg></button></div>
          <div class="tool"><button disabled aria-label="Projected view"><svg class="i gr"><use href="#g2"/></svg></button></div>
          <div class="tool"><button disabled aria-label="Auxiliary view"><svg class="i gr"><use href="#g3"/></svg></button></div>
          <div class="tool off"><button disabled aria-label="Section view"><svg class="i gr"><use href="#g4"/></svg></button><button class="dd" aria-label="More"></button></div>
          <div class="tool"><button disabled aria-label="Detail view"><svg class="i gr"><use href="#g5"/></svg></button></div>
          <div class="tool"><button disabled aria-label="Standard views"><svg class="i gr"><use href="#g6"/></svg></button></div>
          <div class="tool"><button disabled aria-label="Broken-out section"><svg class="i gr"><use href="#g7"/></svg></button></div>
          <div class="tool"><button disabled aria-label="Break"><svg class="i gr"><use href="#g8"/></svg></button></div>
          <div class="tool"><button disabled aria-label="Crop view"><svg class="i gr"><use href="#g9"/></svg></button></div>
          <div class="tool"><button disabled aria-label="Alternate view"><svg class="i gr"><use href="#g10"/></svg></button></div>
        </div>
        <div class="vbar fill">
          <div class="grip"></div>
          <div class="tool"><button aria-label="Smart dimension"><svg class="i"><use href="#dim"/></svg></button><button class="dd" aria-label="More"></button></div>
          <div class="tool"><button aria-label="Auto dimension"><svg class="i"><use href="#dimg"/></svg></button></div>
          <hr>
          <div class="tool"><button class="abc"><span>ABC</span><svg class="chk"><use href="#chk"/></svg></button></div>
          <div class="tool"><button aria-label="Format painter"><svg class="i"><use href="#paint"/></svg></button></div>
          <hr>
          <div class="tool"><button class="note">A</button></div>
          <div class="tool off"><button aria-label="Linear note pattern"><svg class="i"><use href="#aaa"/></svg></button><button class="dd" aria-label="More"></button></div>
          <div class="tool"><button aria-label="Balloon"><svg class="i"><use href="#ball"/></svg></button></div>
          <div class="tool"><button aria-label="Auto balloon"><svg class="i"><use href="#ballg"/></svg></button></div>
          <div class="tool"><button aria-label="Surface finish"><svg class="i"><use href="#surf"/></svg></button></div>
          <div class="tool"><button aria-label="Weld symbol"><svg class="i"><use href="#weld"/></svg></button></div>
          <button class="more" aria-label="More tools"><svg class="i14"><use href="#chev"/></svg></button>
        </div>
      </aside>
      <div class="stage">
        <div class="split">
          <section class="panel">
            <div class="ptabs">
              <button class="on" aria-label="Feature tree"><svg class="i"><use href="#part"/></svg></button><button aria-label="Property manager"><svg class="i"><use href="#props"/></svg></button><button aria-label="Configurations"><svg class="i"><use href="#cfg"/></svg></button><button aria-label="DimXpert manager"><svg class="i"><use href="#dimx"/></svg></button><button aria-label="Display manager"><svg class="i"><use href="#app"/></svg></button>
              <button class="pmore" aria-label="Expand"><svg class="i"><use href="#chevr"/></svg></button>
            </div>
            <label class="filter"><svg class="i12"><use href="#funnel"/></svg><input type="text" aria-label="Filter"></label>
            <div class="root"><svg class="i"><use href="#part"/></svg><span>Part5&nbsp; (Default&lt;&lt;Default&gt;_Displa</span></div>
            <ul class="tree">
              <li><svg class="i"><use href="#sens"/></svg>Sensors</li>
              <li><button aria-label="Expand Annotations"><svg class="i9"><use href="#xbox"/></svg></button><svg class="i"><use href="#anno"/></svg>Annotations</li>
              <li><svg class="i"><use href="#mat"/></svg>Material &lt;not specified&gt;</li>
              <li><svg class="i"><use href="#pl"/></svg>Front Plane</li>
              <li><svg class="i"><use href="#pl"/></svg>Top Plane</li>
              <li><svg class="i"><use href="#pl"/></svg>Right Plane</li>
              <li><svg class="i"><use href="#orig"/></svg>Origin</li>
              <li><button aria-label="Expand Boss-Extrude1"><svg class="i9"><use href="#xbox"/></svg></button><svg class="i"><use href="#boss"/></svg>Boss-Extrude1</li>
            </ul>
            <button class="handle" aria-label="Collapse panel"><i></i><i></i><i></i></button>
          </section>
          <section class="view">
            <svg class="model" viewBox="286 123 1036 541" aria-hidden="true">
              <defs>
                <linearGradient id="cyl" gradientUnits="userSpaceOnUse" x1="621" y1="0" x2="984" y2="0">
                  <stop offset="0" stop-color="#5e616e"/><stop offset=".05" stop-color="#545763"/><stop offset=".1" stop-color="#50535f"/><stop offset=".16" stop-color="#5c5f6c"/><stop offset=".23" stop-color="#6a6d7d"/><stop offset=".38" stop-color="#757889"/><stop offset=".57" stop-color="#7e8196"/><stop offset=".9" stop-color="#7b7e92"/><stop offset=".93" stop-color="#7c7f94"/><stop offset="1" stop-color="#6f7284"/>
                </linearGradient>
              </defs>
              <path d="M621.500 318V517.500A121.500 70 0 0 0 829 566L948 497.500A121.500 70 0 0 0 983.500 448V250z" fill="url(#cyl)" stroke="#10131c"/>
              <path d="M657 268.500L776 200.500A121.500 70 0 0 1 948 299.500L829 367.500A121.500 70 0 0 1 657 268.500z" fill="#989cb6" stroke="#10131c"/>
              <path d="M828.500 368V566M948.500 299.500V497.500" stroke="#10131c"/>
            </svg>
            <div class="hud">
              <button aria-label="Zoom to fit"><svg class="i"><use href="#zfit"/></svg></button><button aria-label="Zoom to area"><svg class="i"><use href="#zarea"/></svg></button><button aria-label="Previous view"><svg class="i"><use href="#prev"/></svg></button><button aria-label="Section view"><svg class="i"><use href="#sect"/></svg></button><button aria-label="View orientation"><svg class="i"><use href="#vcube"/></svg><span class="tri"></span></button><button aria-label="Display style"><svg class="i"><use href="#dcube"/></svg><span class="tri"></span></button><button aria-label="Hide or show items"><svg class="i"><use href="#glass"/></svg><span class="tri"></span></button><button aria-label="Edit appearance"><svg class="i"><use href="#rgb"/></svg></button><button aria-label="Apply scene"><svg class="i"><use href="#scene"/></svg><span class="tri"></span></button><button aria-label="View settings"><svg class="i"><use href="#vset"/></svg><span class="tri"></span></button>
            </div>
            <div class="mark"><span lang="zh">莫西网</span>www.3dmox.com</div>
            <div class="triad">
              <svg viewBox="0 0 60 56" aria-hidden="true"><path d="M28 35V16" stroke="#0c6c1c" stroke-width="4"/><path d="M23 19l5-9 5 9z" fill="#0f7a24" stroke="#063"/><path d="M28 35l-14 7" stroke="#1a1ca0" stroke-width="4"/><path d="M7 46l6-8 4 7z" fill="#1a22c0" stroke="#118"/><path d="M28 35l14 7" stroke="#a81818" stroke-width="4"/><path d="M50 46l-10 0 4-8z" fill="#d02020" stroke="#911"/><path d="M25 1l3 4 3-4M28 5v4" fill="none" stroke="#0c6c1c"/><path d="M1 44h5l-5 8h5" fill="none" stroke="#1a1ca0" stroke-width="1.200"/><path d="M49 44l5 8M54 44l-5 8" stroke="#d02020" stroke-width="1.200"/></svg>
              <span>*Isometric</span>
            </div>
            <div class="pane">
              <button class="on" aria-label="Resources"><svg class="i"><use href="#home"/></svg></button><button aria-label="Design library"><svg class="i"><use href="#lib"/></svg></button><button aria-label="File explorer"><svg class="i"><use href="#fold2"/></svg></button><button aria-label="View palette"><svg class="i"><use href="#vpal"/></svg></button><button aria-label="Appearances"><svg class="i"><use href="#rgb"/></svg></button><button aria-label="Custom properties"><svg class="i"><use href="#props"/></svg></button>
            </div>
          </section>
        </div>
        <div class="sheets">
          <button class="nav" aria-label="First">|◂</button><button class="nav" aria-label="Previous">◂</button><button class="nav" aria-label="Next">▸</button><button class="nav" aria-label="Last">▸|</button>
          <button class="sheet on">Model</button><button class="sheet">Motion Study 1</button>
        </div>
      </div>
    </div>
  </div>
  <aside class="vbar right">
    <div class="grip"></div>
    <div class="tool"><button aria-label="Sketch"><svg class="i"><use href="#sketch"/></svg></button><button class="dd" aria-label="More"></button></div>
    <div class="tool"><button aria-label="Smart dimension"><svg class="i"><use href="#dim"/></svg></button><button class="dd" aria-label="More"></button></div>
    <hr>
    <div class="tool"><button aria-label="Line"><svg class="i"><use href="#line"/></svg></button><button class="dd" aria-label="More"></button></div>
    <div class="tool"><button aria-label="Rectangle"><svg class="i"><use href="#rect"/></svg></button><button class="dd" aria-label="More"></button></div>
    <div class="tool"><button aria-label="Slot"><svg class="i"><use href="#slot"/></svg></button><button class="dd" aria-label="More"></button></div>
    <div class="tool"><button aria-label="Circle"><svg class="i"><use href="#circ"/></svg></button><button class="dd" aria-label="More"></button></div>
    <div class="tool"><button aria-label="Arc"><svg class="i"><use href="#arc"/></svg></button><button class="dd" aria-label="More"></button></div>
    <div class="tool"><button aria-label="Spline"><svg class="i"><use href="#spl"/></svg></button><button class="dd" aria-label="More"></button></div>
    <div class="tool"><button aria-label="Ellipse"><svg class="i"><use href="#ell"/></svg></button><button class="dd" aria-label="More"></button></div>
    <div class="tool off"><button aria-label="Sketch fillet"><svg class="i"><use href="#sfil"/></svg></button><button class="dd" aria-label="More"></button></div>
    <div class="tool"><button aria-label="Polygon"><svg class="i"><use href="#poly"/></svg></button></div>
    <div class="tool"><button aria-label="Point"><svg class="i"><use href="#spt"/></svg></button></div>
    <div class="tool"><button aria-label="Plane"><svg class="i"><use href="#cplane"/></svg></button></div>
    <div class="tool"><button aria-label="Text"><svg class="i"><use href="#stext"/></svg></button></div>
    <hr>
    <div class="tool off"><button aria-label="Trim"><svg class="i"><use href="#trim"/></svg></button><button class="dd" aria-label="More"></button></div>
    <div class="tool"><button aria-label="Convert entities"><svg class="i"><use href="#conv"/></svg></button><button class="dd" aria-label="More"></button></div>
    <div class="tool"><button aria-label="Offset"><svg class="i"><use href="#offs"/></svg></button></div>
    <div class="tool"><button aria-label="Mirror"><svg class="i"><use href="#mirr"/></svg></button></div>
    <div class="tool off"><button aria-label="Linear pattern"><svg class="i"><use href="#lpat"/></svg></button><button class="dd" aria-label="More"></button></div>
    <div class="tool off"><button aria-label="Move entities"><svg class="i"><use href="#move"/></svg></button><button class="dd" aria-label="More"></button></div>
    <div class="tool off"><button aria-label="Relations"><svg class="i"><use href="#rel"/></svg></button><button class="dd" aria-label="More"></button></div>
    <div class="tool"><button aria-label="Repair sketch"><svg class="i"><use href="#rep"/></svg></button></div>
    <button class="more" aria-label="More tools"><svg class="i14"><use href="#chev"/></svg></button>
  </aside>
</main>

<div class="snaps">
  <div class="snapbar">
    <span class="vgrip"></span>
    <button aria-label="Point snap"><svg class="i"><use href="#s1"/></svg></button><button aria-label="Center snap"><svg class="i"><use href="#s2"/></svg></button><button aria-label="Midpoint snap"><svg class="i"><use href="#s3"/></svg></button><button aria-label="Quadrant snap"><svg class="i"><use href="#s4"/></svg></button><button aria-label="Intersection snap"><svg class="i"><use href="#s5"/></svg></button><button aria-label="Nearest snap"><svg class="i"><use href="#s6"/></svg></button>
    <span class="vsep"></span>
    <button aria-label="Tangent snap"><svg class="i"><use href="#s7"/></svg></button><button aria-label="Perpendicular snap"><svg class="i"><use href="#s8"/></svg></button><button aria-label="Parallel snap"><svg class="i"><use href="#s9"/></svg></button><button aria-label="Horizontal and vertical snap"><svg class="i"><use href="#s10"/></svg></button><button aria-label="Point alignment snap"><svg class="i"><use href="#s11"/></svg></button>
    <span class="vsep"></span>
    <button aria-label="Length snap"><svg class="i"><use href="#s12"/></svg></button><button aria-label="Grid snap"><svg class="i"><use href="#s13"/></svg></button><button aria-label="Angle snap"><svg class="i"><use href="#s14"/></svg></button>
  </div>
</div>
<footer class="status"><span>SolidWorks Premium 2011 x64 Edition</span><span class="edit">Editing Part</span><button aria-label="Quick tips"><svg class="i14"><use href="#hq"/></svg></button><button class="tagb" aria-label="Tags"><svg class="i"><use href="#tag"/></svg></button></footer>

<div class="taskbar">
  <button class="app start" aria-label="Start"><svg viewBox="0 0 38 34"><circle cx="19" cy="18" r="17.500" fill="url(#orb)" stroke="#5c86a6"/><path d="M11 12q4-3 7-1l-1 7q-4-2-7 0z" fill="#e8602c"/><path d="M20 11q4 2 8-1l-2 8q-4 2-7 0z" fill="#8cc43c"/><path d="M9 20q4-2 7 0l-1 7q-4-2-7 0z" fill="#4aa8e8"/><path d="M18 21q4 2 7 0l-2 7q-3 2-7 0z" fill="#ffcc30"/></svg></button>
  <button class="app run" aria-label="Explorer"><svg viewBox="0 0 36 34"><path d="M3 8l2-3h7l2 3h18v22H3z" fill="#f4dc80" stroke="#c8a84a"/><path d="M7 4h8v6H7z" fill="#e8f4d8"/><path d="M17 5h12v5H17z" fill="#fff2b8"/><path d="M5 12h26M5 16h26" stroke="#fff4c0" stroke-width="2"/><path d="M8 32V23q0-3 3-3h14q3 0 3 3v9" fill="none" stroke="#7cc0e8" stroke-width="4"/></svg></button>
  <button class="app" aria-label="Media player"><svg viewBox="0 0 36 34"><path d="M12 5h18v23H12z" fill="#6ab0dc"/><path d="M6 7h20v22H6z" fill="#a8d4ee" stroke="#4a88b4"/><circle cx="17" cy="18" r="9.500" fill="#f08020" stroke="#fbc080"/><path d="M14 12l9 6-9 6z" fill="#fff"/></svg></button>
  <button class="app" aria-label="Internet Explorer"><svg viewBox="0 0 36 34"><path d="M27 24q-3 6-10 6-10-1-10-11T18 8q10 1 10 12H13q1 6 6 5l4-3z" fill="#2a98dc"/><path d="M13 16h9q-1-4-4.500-4T13 16z" fill="#081420"/><path d="M6 31q-6-2 4-14T32 3q3 2-3 9" fill="none" stroke="#f4c840" stroke-width="2.500"/></svg></button>
  <button class="app run green" aria-label="Chrome"><svg viewBox="0 0 36 34"><circle cx="18" cy="18" r="14" fill="#f8ce30"/><path d="M18 18L5.500 11.500A14 14 0 0 1 31 12z" fill="#dc3c2c"/><path d="M18 18L5.500 11.500A14 14 0 0 0 17 32l5-9z" fill="#38a84c"/><circle cx="18" cy="18" r="6.500" fill="#fff"/><circle cx="18" cy="18" r="5" fill="#3a78dc"/></svg></button>
  <button class="app run violet" aria-label="BitTorrent"><svg viewBox="0 0 36 34"><circle cx="18" cy="18" r="15.500" fill="#5b3a90" stroke="#fff" stroke-width="2"/><path d="M23 29Q8 29 8 18 9 8 22 7M25 26q-13 1-13-8 1-7 10-7M27 22q-11 2-11-4 1-4 7-3" fill="none" stroke="#fff" stroke-width="2.300"/></svg></button>
  <button class="app run red" aria-label="SolidWorks"><svg viewBox="0 0 24 24"><use href="#sw"/></svg></button>
  <button class="app run" aria-label="Paint"><svg viewBox="0 0 36 34"><path d="M4 22q0-12 13-14 14 0 14 10-1 6-9 5-3 0-3 4-3 5-9 3-6-3-6-8z" fill="#c8e2f4" stroke="#6a98bc"/><circle cx="11" cy="18" r="2.500" fill="#d83828"/><circle cx="17" cy="13" r="2.500" fill="#38a840"/><circle cx="24" cy="14" r="2.500" fill="#f0c020"/><circle cx="10" cy="25" r="2.500" fill="#3868d0"/><path d="M32 4L18 22l-3 4 5-2L34 6z" fill="#e09838" stroke="#8a5818"/></svg></button>
  <div class="tray">
    <span>EN</span>
    <svg class="i" viewBox="0 0 16 16"><path d="M4 11l4-4 4 4z" fill="#fff"/></svg>
    <svg class="i" viewBox="0 0 16 16"><path d="M2.500 1v15" stroke="#fff" stroke-width="1.500"/><path d="M4 3h4l1 1h5v6H4z" fill="#fff"/><circle cx="11" cy="11" r="4.500" fill="#d83020"/><path d="M9 9l4 4M13 9l-4 4" stroke="#fff" stroke-width="1.400"/></svg>
    <svg class="i" viewBox="0 0 16 16"><path d="M7 3H2v11h8v-2M4 1.500h4" fill="none" stroke="#fff" stroke-width="1.500"/><path d="M9.500 2v3M12.500 2v3M11 10v3" stroke="#fff" stroke-width="1.300"/><path d="M7.500 5h7v3l-2.500 3h-2L7.500 8z" fill="#fff"/></svg>
    <svg class="i" viewBox="0 0 16 16"><path d="M2 14v-2M5 14v-4" stroke="#fff" stroke-width="2"/><path d="M8.500 14V8M11.500 14V5M14.500 14V3" stroke="#71757c" stroke-width="2"/></svg>
    <svg class="i" viewBox="0 0 16 16"><path d="M1 6h3l3-4v12l-3-4H1z" fill="#fff"/><path d="M9 6q1 2 0 4M11 4q2.500 4 0 8M13.500 2.500q3.500 5.500 0 11" fill="none" stroke="#fff"/></svg>
    <time>5:16 AM<br>6/3/2013</time>
    <button class="desk" aria-label="Show desktop"></button>
  </div>
</div>
</body>
</html>
```
FILE: styles.css
```css
* { box-sizing: border-box; }
html, body { height: 100%; }
body {
  margin: 0;
  display: flex;
  flex-direction: column;
  overflow: hidden;
  background: #dfe2ee;
  color: #15151c;
  font: 11px/14px "DejaVu Sans Condensed", "DejaVu Sans", sans-serif;
}
button {
  margin: 0;
  padding: 0;
  border: 0;
  background: none;
  color: inherit;
  font: inherit;
  display: flex;
  align-items: center;
  justify-content: center;
}
svg { display: block; flex: none; }
.sprite { position: absolute; width: 0; height: 0; }
.i { width: 16px; height: 16px; }
.i9 { width: 9px; height: 9px; }
.i12 { width: 12px; height: 12px; }
.i14 { width: 14px; height: 14px; }
.i18 { width: 18px; height: 18px; }
.i24 { width: 24px; height: 24px; }
.gr { fill: none; stroke: #8b90a3; }
.tri, .dd::before {
  content: "";
  display: block;
  border: 3px solid transparent;
  border-top-color: #2c3048;
  border-bottom: 0;
}
.off .dd::before, .off .tri { border-top-color: #9498a8; }

/* title bar */
.titlebar { display: flex; flex: none; height: 29px; background: linear-gradient(#f2f2fa, #dcdcec 60%, #c4c4da); border-bottom: 2px solid #55566e; }
.brand { display: flex; align-items: center; gap: 3px; width: 125px; padding-left: 1px; background: linear-gradient(#f6f6fc, #cfcfe2); color: #4a4a54; font: 17px/24px "Liberation Sans", Arial, sans-serif; }
.brand b { color: #111; }
.menus { display: flex; align-items: center; gap: 15px; padding: 2px 3px 0 9px; border-left: 8px solid #8080a4; border-right: 1px solid #55566e; background: linear-gradient(#f0f0f8, #d6d6e8 45%, #bcbcd4); color: #24245c; white-space: nowrap; }
.quick { display: flex; flex: 1; align-items: center; padding-left: 2px; }
.pair { display: flex; height: 22px; }
.pair button:first-child { width: 20px; }
.pair .dd { width: 16px; }
.pressed { border: 1px solid #77789c; border-radius: 4px; background: #eeeef6; }
.pressed button:first-child { width: 21px; background: #b4b4cf; border-right: 1px solid #77789c; }
.pressed .dd { width: 12px; }
.q1 { width: 23px; height: 22px; }
.q2 { width: 28px; height: 22px; }
.dd { width: 12px; height: 22px; }
.doc { margin-left: 14px; padding-top: 2px; }
.search { display: flex; flex: 0 1 202px; align-items: center; gap: 4px; height: 22px; margin-left: auto; padding: 0 5px; border: 1px solid #44465a; border-radius: 4px; background: linear-gradient(#dfe3ec, #fff); }
.search input { flex: 1; min-width: 0; padding: 0; border: 0; background: none; color: #444; font: inherit; }
.search input::placeholder { color: #444a5a; opacity: 1; }

/* ribbon */
.ribbon { position: relative; display: flex; flex: none; height: 74px; padding: 4px 0 4px 8px; background: linear-gradient(#fdfdff, #eef0f7 50%, #d3d5e5); color: #22225a; line-height: 13px; }
.grp { display: flex; border-right: 1px solid #b8bacb; }
.grp.off { color: #7c7e88; }
.g-a { width: 183px; }
.g-b { width: 203px; padding-left: 4px; }
.g-c { width: 51px; justify-content: center; }
.g-d { width: 103px; padding-left: 4px; }
.g-e { width: 126px; padding-left: 4px; justify-content: space-between; }
.g-f { border: 0; }
.big { flex-direction: column; justify-content: flex-start; padding-top: 10px; white-space: nowrap; }
.big svg { margin-bottom: 1px; }
.tall { padding-top: 2px; }
.tall .tri { margin-top: 24px; }
.w58 { width: 58px; }
.w62 { width: 62px; }
.w28 { width: 28px; }
.w36 { width: 36px; }
.col { display: flex; flex-direction: column; justify-content: space-between; }
.col button { gap: 6px; height: 20px; justify-content: flex-start; white-space: nowrap; }
.c94 { width: 94px; }
.ds { position: absolute; right: 2px; top: 2px; width: 74px; height: 70px; }

/* work area */
.work { display: flex; flex: 1; min-height: 0; border-top: 1px solid #4c4e68; }
.center { display: flex; flex: 1; flex-direction: column; min-width: 0; }
.tabs { display: flex; flex: none; height: 19px; background: #bdbdbd; color: #50505c; font: 12px/15px "Liberation Sans", Arial, sans-serif; }
.tabs button[role] { height: 18px; padding: 0 8px; border-right: 1px solid #55566e; border-bottom: 2px solid #55566e; background: #bbbbd0; white-space: nowrap; }
.tabs .on { height: 20px; background: #f0f1f7; color: #181820; font-weight: bold; }
.docctl { display: flex; gap: 7px; align-self: flex-end; height: 12px; margin-left: auto; padding-right: 9px; z-index: 1; }
.body { display: flex; flex: 1; min-height: 0; }
.rail { display: flex; flex: none; flex-direction: column; width: 44px; margin-right: 1px; background: linear-gradient(#eef0fb 40%, #b9c0d8 85%); }
.rail + .rail { margin-right: 0; }
.vbar { display: flex; flex: none; flex-direction: column; padding-bottom: 8px; border-bottom: 1px solid #9498ae; background: linear-gradient(90deg, #f1f4fe, #dfe4f2 45%, #b1b8cc); }
.narrow { width: 30px; }
.fill { flex: 1; }
.vbar + .vbar { border-top: 1px solid #fff; }
.grip { flex: none; width: 36px; height: 12px; margin-left: 4px; background: radial-gradient(circle, #8087a0 1px, transparent 1px) 0 4px / 4px 4px repeat-x; }
.narrow .grip { width: 22px; }
.first .grip { height: 15px; background-position: 0 6px; }
.tool { display: flex; flex: none; align-items: center; gap: 5px; height: 23px; padding-left: 4px; }
.tool button:first-child { width: 22px; height: 22px; }
.tool .dd { width: 12px; margin-left: -3px; }
.tool .down { border: 1px solid #5f6688; border-radius: 3px; background: #b6bdd6; }
.vbar hr { flex: none; width: 36px; height: 1px; margin: 4px 0 3px 4px; border: 0; background: #757b94; }
.abc { flex-direction: column; color: #111; font: 9px/9px "Liberation Sans", Arial, sans-serif; }
.chk { width: 16px; height: 10px; }
.note { color: #14149c; font: bold 21px/22px "Liberation Serif", serif; }
.more { align-self: center; margin-top: auto; }
.right { width: 40px; border-left: 1px solid #f6f8ff; background: linear-gradient(90deg, #eef0fe, #d9dcf0 50%, #b6bcd6); }

/* feature manager */
.stage { display: flex; flex: 1; flex-direction: column; min-width: 0; }
.split { display: flex; flex: 1; min-height: 0; }
.panel { position: relative; flex: none; width: 197px; padding: 8px 2px 0 1px; border-right: 2px solid #5a5c78; background: #e0e3ed; }
.ptabs { display: flex; height: 22px; background: #cdcfe4; border-bottom: 1px solid #66688a; }
.ptabs button { width: 28px; border: 1px solid #77799a; border-bottom: 0; border-radius: 4px 4px 0 0; background: #b9bbd2; }
.ptabs .on { background: #eceef6; }
.ptabs .pmore { margin-left: auto; width: 20px; border: 0; background: none; }
.filter { display: flex; align-items: center; height: 17px; margin: 1px 0 4px; padding-left: 7px; border: 1px solid #74768e; border-radius: 9px; background: linear-gradient(#d8dbe8, #fff); }
.filter input { flex: 1; min-width: 0; height: 14px; padding: 0; border: 0; background: none; }
.root { display: flex; align-items: center; gap: 5px; height: 18px; white-space: nowrap; padding-left: 1px; }
.tree { margin: 0; padding: 0; list-style: none; border-bottom: 2px solid #2a5c98; }
.tree li { position: relative; display: flex; align-items: center; gap: 5px; height: 18px; padding-left: 20px; font: 11px/16px "Open Sans", "Noto Sans", sans-serif; }
.root span { font: 11px/16px "Open Sans", "Noto Sans", sans-serif; }
.tree li::before { content: ""; position: absolute; left: 9px; top: 0; height: 9px; width: 10px; border: 1px dotted #888; border-width: 0 0 1px 1px; }
.tree li::after { content: ""; position: absolute; left: 9px; top: 9px; height: 9px; border-left: 1px dotted #888; }
.tree li:last-child::after { display: none; }
.tree button { position: absolute; left: 5px; top: 5px; z-index: 1; }
.handle { position: absolute; right: -9px; top: 246px; z-index: 2; flex-direction: column; gap: 4px; width: 9px; height: 28px; border: 2px solid #5a5c78; border-left: 0; border-radius: 0 4px 4px 0; background: #e0e3ed; }
.handle i { border: 2px solid transparent; border-right: 3px solid #44465c; border-left: 0; }

/* viewport */
.view { position: relative; flex: 1; min-width: 0; background: linear-gradient(#c0c0c0, #dcdcdc 40%, #ffffff 92%); border-bottom: 1px solid #222; }
.model { width: 100%; height: 100%; }
.hud { position: absolute; top: 7px; left: 0; right: 0; display: flex; justify-content: center; gap: 7px; padding-right: 5px; }
.hud button { gap: 4px; }
.mark { position: absolute; left: 0; right: 0; top: 41%; padding-right: 244px; text-align: center; white-space: nowrap; color: #e0e3e8; font: 52px/64px "Liberation Serif", "Noto Sans CJK SC", serif; text-shadow: 1px 1px 1px #444; }
.mark span { font: 300 58px/64px "Noto Sans CJK SC", sans-serif; }
.triad { position: absolute; left: 12px; bottom: 1px; color: #28284c; font-size: 12px; font-weight: bold; }
.triad svg { width: 60px; height: 56px; margin: 0 0 20px 1px; }
.pane { position: absolute; right: 0; top: 40px; width: 24px; }
.pane button { width: 24px; height: 24px; border: 1px solid #777a94; border-right: 0; border-radius: 4px 0 0 4px; background: #b4b8cc; }
.pane .on { background: #f6f7fc; }

.sheets { display: flex; flex: none; height: 15px; padding-left: 2px; background: #e4e6f0; font: 12px/13px "Liberation Sans", Arial, sans-serif; }
.nav { width: 16px; border: 1px solid #8c8ea2; background: #b7b9ca; color: #85879b; font-size: 9px; }
.sheet { margin-left: 1px; padding: 0 9px; border: 1px solid #33354a; border-top: 0; background: #b9bbcf; color: #16161e; }
.sheet.on { background: #e6e8f1; font-weight: bold; }

/* lower bars */
.snaps { flex: none; height: 30px; background: linear-gradient(#eceef7, #d3d5e5 70%, #c4c6da); border-top: 1px solid #f8f8ff; }
.snapbar { display: flex; align-items: center; width: 359px; height: 28px; border-right: 1px solid #9092a8; }
.snapbar button { width: 23px; height: 24px; }
.vgrip { width: 4px; height: 20px; margin: 0 4px 0 4px; background: radial-gradient(circle, #8087a0 1px, transparent 1px) 0 0 / 4px 4px repeat-y; }
.vsep { width: 1px; height: 20px; margin: 0 3px; background: #7d8096; }
.status { display: flex; flex: none; align-items: center; height: 21px; padding: 0 10px 0 2px; background: linear-gradient(#d4d6e6, #c2c4d8); border-top: 1px solid #77798e; font-family: "Open Sans", "Noto Sans", sans-serif; }
.edit { margin: 0 32px 0 auto; }
.tagb { margin-left: 50px; }

.taskbar { display: flex; flex: none; height: 34px; padding-left: 7px; gap: 5px; border-top: 1px solid #3c4048; background: linear-gradient(90deg, #04070a 480px, #1c2c3a 500px, #24384a 42%, #0c1a28 55%, #24364a 57%, #101c28 78%, #04070a 84%); color: #fff; }
.app { width: 57px; height: 34px; }
.app svg { width: 36px; height: 33px; }
.start { width: 44px; margin-right: 4px; }
.start svg { width: 38px; height: 34px; }
.app.start { justify-content: flex-start; }
.run { border: 1px solid #70757c; background: linear-gradient(120deg, #8c9094, #34383c 70%); }
.green { background: linear-gradient(90deg, #4cb84c, #7ce070 70%, #38503c 72%); }
.violet { background: linear-gradient(120deg, #b8a8cc, #54446c); }
.red { background: linear-gradient(120deg, #f0d8d8, #806060); }
.tray { display: flex; align-items: center; gap: 8px; margin-left: auto; font: 12px/16px "Open Sans", "Noto Sans", sans-serif; }
.tray time { width: 66px; font-size: 11px; text-align: center; }
.desk { width: 9px; height: 34px; margin-left: -2px; border-left: 1px solid #555; background: #20262c; }
```
